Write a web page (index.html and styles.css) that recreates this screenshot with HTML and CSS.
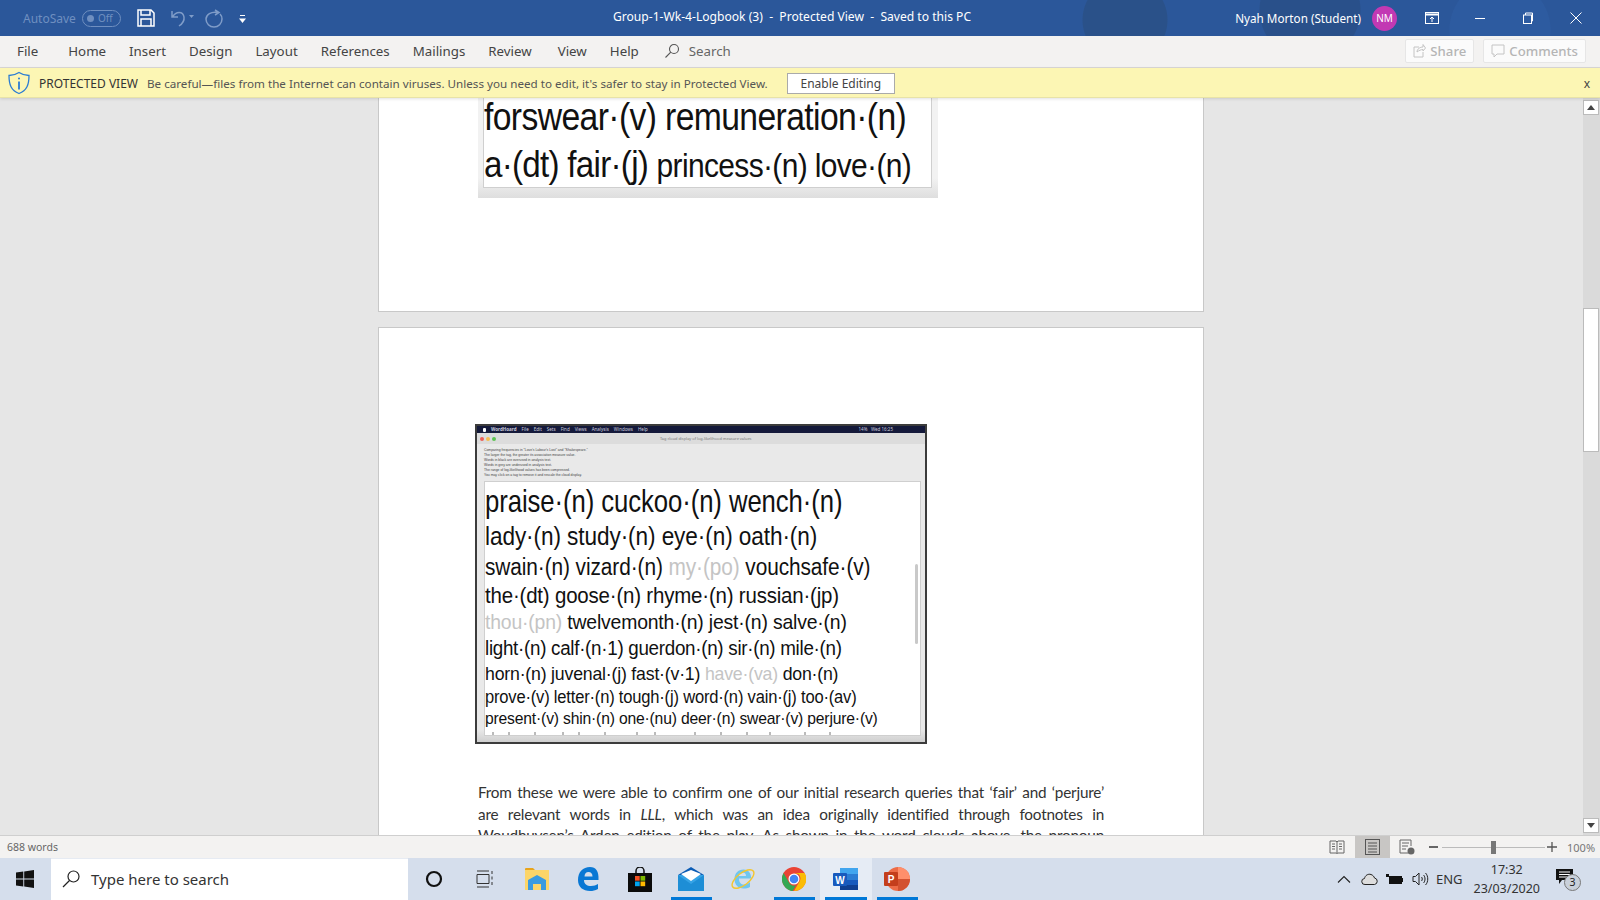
FILE: index.html
```html
<!DOCTYPE html>
<html lang="en">
<head>
<meta charset="utf-8">
<title>Group-1-Wk-4-Logbook (3) - Protected View</title>
<link rel="stylesheet" href="styles.css">
</head>
<body>
<div class="app">
  <header class="titlebar">
    <div class="qat">
      <span class="autosave">AutoSave</span>
      <span class="toggle"><i class="knob"></i><b>Off</b></span>
      <svg class="ic save" width="20" height="20" viewBox="0 0 20 20" fill="none" stroke="#fff" stroke-width="1.5"><path d="M2 2h13l3 3v13H2z"/><path d="M5 2v5h9V2M5 18v-7h10v7"/></svg>
      <svg class="ic undo" width="24" height="20" viewBox="0 0 24 20" fill="none" stroke="#7f9cc8" stroke-width="1.5"><path d="M2 3v6h6M2.500 9C6 3 13 3 14 9c.6 4-2 7-5 9"/><path d="M19 7h5l-2.500 3z" fill="#7f9cc8" stroke="none"/></svg>
      <svg class="ic redo" width="20" height="20" viewBox="0 0 20 20" fill="none" stroke="#7f9cc8" stroke-width="1.500"><path d="M11 2l4 2.500-4 2.500M14 4.500C7 3 2 7 2 11a8 8 0 0 0 16 0c0-2-1-4-2-5"/></svg>
      <svg class="ic more" width="7" height="9" viewBox="0 0 7 9" fill="#fff"><rect x="1" width="5" height="1"/><path d="M0 3.500h7L3.500 8z"/></svg>
    </div>
    <div class="doctitle">Group-1-Wk-4-Logbook (3)&nbsp; -&nbsp; Protected View&nbsp; -&nbsp; Saved to this PC</div>
    <div class="account">
      <span class="username">Nyah Morton (Student)</span>
      <span class="avatar">NM</span>
      <svg class="wc first" width="14" height="12" viewBox="0 0 14 12" fill="none" stroke="#fff"><rect x=".5" y=".5" width="13" height="11"/><path d="M1 2.500h12" stroke-width="2"/><path d="M7 10V5M5 7l2-2 2 2"/></svg>
      <svg class="wc" width="12" height="12" viewBox="0 0 12 12" stroke="#fff"><path d="M1 6.500h10"/></svg>
      <svg class="wc" width="12" height="12" viewBox="0 0 12 12" fill="none" stroke="#fff"><rect x="1.500" y="3" width="8" height="8.500"/><path d="M3.500 3V1h7v8H9.500"/></svg>
      <svg class="wc" width="12" height="12" viewBox="0 0 12 12" stroke="#fff"><path d="M.5 .5l11 11M11.500 .5l-11 11"/></svg>
    </div>
  </header>

  <nav class="ribbon">
    <span class="tab tab-file">File</span>
    <span class="tab">Home</span>
    <span class="tab">Insert</span>
    <span class="tab">Design</span>
    <span class="tab">Layout</span>
    <span class="tab">References</span>
    <span class="tab">Mailings</span>
    <span class="tab tab-review">Review</span>
    <span class="tab">View</span>
    <span class="tab">Help</span>
    <span class="tab tab-search">
      <svg width="16" height="16" viewBox="0 0 16 16" fill="none" stroke="#555" stroke-width="1.100"><circle cx="10" cy="6" r="4.500"/><path d="M6.800 9.200L1.500 14.500"/></svg>
      Search
    </span>
    <span class="ribbon-actions">
      <span class="action">
        <svg width="13" height="15" viewBox="0 0 13 15" fill="none" stroke="#c4c4c4"><path d="M6 4H1v10h9V9"/><path d="M4 9c0-3 3-5 6-5V1.500L12.500 5 10 8V6.500c-2 0-4 1-6 2.500z"/></svg>
        Share
      </span>
      <span class="action">
        <svg width="14" height="14" viewBox="0 0 14 14" fill="none" stroke="#c4c4c4"><path d="M1 1h12v9H6l-3 3v-3H1z"/></svg>
        Comments
      </span>
    </span>
  </nav>

  <div class="msgbar">
    <svg class="shield" width="24" height="24" viewBox="0 0 24 24" fill="none" stroke="#2b7cd3" stroke-width="1.300"><path d="M12 1.500c3 2 6 3 10 3 0 9-2 15-10 18C4 19.500 2 13.500 2 4.500c4 0 7-1 10-3z"/><circle cx="12" cy="7.500" r="1" fill="#2b7cd3" stroke="none"/><path d="M12 10.500v8" stroke-width="1.800"/></svg>
    <strong class="pv">PROTECTED VIEW</strong>
    <span class="pvtext">Be careful—files from the Internet can contain viruses. Unless you need to edit, it's safer to stay in Protected View.</span>
    <span class="enable">Enable Editing</span>
    <span class="msgclose">x</span>
  </div>

  <main class="docarea">
    <div class="canvas">
      <section class="page page-one">
        <div class="macwin macwin-top">
          <div class="cloud cloud-top">
            <div class="ln l-a">forswear·(v) remuneration·(n)</div>
            <div class="ln l-b">a·(dt) fair·(j) <span class="smaller">princess·(n) love·(n)</span></div>
          </div>
        </div>
      </section>
      <section class="page page-two">
        <div class="macwin macwin-shot">
          <div class="macmenu">
            <span class="apple"></span><b>WordHoard</b><span>File</span><span>Edit</span><span>Sets</span><span>Find</span><span>Views</span><span>Analysis</span><span>Windows</span><span>Help</span>
            <span class="macright">14% &nbsp; Wed 16:25</span>
          </div>
          <div class="mactitle">
            <i class="dot red"></i><i class="dot amber"></i><i class="dot green"></i>
            <span class="mactitletext">Tag cloud display of log-likelihood measure values</span>
          </div>
          <div class="macnote">
            <div>Comparing frequencies in "Love's Labour's Lost" and "Shakespeare."</div>
            <div>The larger the tag, the greater its association measure value.</div>
            <div>Words in black are overused in analysis text.</div>
            <div>Words in grey are underused in analysis text.</div>
            <div>The range of log-likelihood values has been compressed.</div>
            <div>You may click on a tag to remove it and rescale the cloud display.</div>
          </div>
          <div class="cloud cloud-main">
            <i class="cloudthumb"></i>
            <div class="ln c1">praise·(n) cuckoo·(n) wench·(n)</div>
            <div class="ln c2">lady·(n) study·(n) eye·(n) oath·(n)</div>
            <div class="ln c3">swain·(n) vizard·(n) <span class="grey">my·(po)</span> vouchsafe·(v)</div>
            <div class="ln c4">the·(dt) goose·(n) rhyme·(n) russian·(jp)</div>
            <div class="ln c5"><span class="grey">thou·(pn)</span> twelvemonth·(n) jest·(n) salve·(n)</div>
            <div class="ln c6">light·(n) calf·(n·1) guerdon·(n) sir·(n) mile·(n)</div>
            <div class="ln c7">horn·(n) juvenal·(j) fast·(v·1) <span class="grey">have·(va)</span> don·(n)</div>
            <div class="ln c8">prove·(v) letter·(n) tough·(j) word·(n) vain·(j) too·(av)</div>
            <div class="ln c9">present·(v) shin·(n) one·(nu) deer·(n) swear·(v) perjure·(v)</div>
            <svg class="ticks" width="360" height="3" viewBox="0 0 360 3" stroke="#777"><path d="M8 0v3M24 0v3M50 0v3M78 0v3M94 0v3M120 0v3M152 0v3M170 0v3M210 0v3M236 0v3M262 0v3M285 0v3M320 0v3M345 0v3"/></svg>
          </div>
        </div>
        <p class="body">
          <span class="bl">From these we were able to confirm one of our initial research queries that ‘fair’ and ‘perjure’</span>
          <span class="bl">are relevant words in <em>LLL</em>, which was an idea originally identified through footnotes in</span>
          <span class="bl">Woudhuysen’s Arden edition of the play. As shown in the word clouds above, the pronoun</span>
        </p>
      </section>
    </div>
    <div class="vscroll">
      <span class="sbtn"><svg width="8" height="5" viewBox="0 0 8 5" fill="#444"><path d="M4 0l4 5H0z"/></svg></span>
      <span class="strack"><i class="sthumb"></i></span>
      <span class="sbtn"><svg width="8" height="5" viewBox="0 0 8 5" fill="#444"><path d="M4 5L8 0H0z"/></svg></span>
    </div>
  </main>

  <footer class="status">
    <span class="words">688 words</span>
    <span class="viewbtn v-read"><svg width="16" height="14" viewBox="0 0 16 14" fill="none" stroke="#666"><path d="M1 1h6l1 1 1-1h6v12H9l-1 .5L7 13H1zM8 2v11M3 4h3M3 6.500h3M3 9h3M10 4h3M10 6.500h3M10 9h3"/></svg></span>
    <span class="viewbtn v-print"><svg width="15" height="16" viewBox="0 0 15 16" fill="none" stroke="#555"><rect x=".5" y=".5" width="14" height="15"/><path d="M3 4h9M3 7h9M3 10h9M3 13h9"/></svg></span>
    <span class="viewbtn v-web"><svg width="16" height="16" viewBox="0 0 16 16" fill="none" stroke="#666"><path d="M9 14H1V1h11v6M3 4h7M3 7h6M3 10h4"/><circle cx="12" cy="12" r="3.500" fill="#666" stroke="none"/></svg></span>
    <span class="zoomctl">
      <i class="zminus"></i>
      <span class="zline"><i class="zthumb"></i></span>
      <svg class="zplus" width="10" height="10" viewBox="0 0 10 10" stroke="#555" stroke-width="1.300"><path d="M0 5h10M5 0v10"/></svg>
      <span class="zpct">100%</span>
    </span>
  </footer>

  <div class="taskbar">
    <svg class="startlogo" width="18" height="18" viewBox="0 0 18 18" fill="#111"><path d="M0 2.600l7.300-1v7H0zM8.200 1.400L18 0v8.600H8.200zM0 9.500h7.300v7l-7.300-1zM8.200 9.500H18V18l-9.800-1.400z"/></svg>
    <div class="tsearch">
      <svg width="20" height="20" viewBox="0 0 20 20" fill="none" stroke="#222" stroke-width="1.200"><circle cx="12.500" cy="7.500" r="5.500"/><path d="M8.500 11.500L2 18"/></svg>
      <span>Type here to search</span>
    </div>
    <div class="tapps">
      <span class="tapp"><svg width="18" height="18" viewBox="0 0 18 18" fill="none" stroke="#111" stroke-width="2.200"><circle cx="9" cy="9" r="7"/></svg></span>
      <span class="tapp"><svg width="18" height="18" viewBox="0 0 18 18" fill="none" stroke="#333"><path d="M1 1h12M1 17h12M1 4.500h12v9H1zM16 1v3M16 6.500v3M16 12v3"/></svg></span>
      <span class="tapp"><svg width="24" height="22" viewBox="0 0 24 22"><path d="M0 1a1 1 0 0 1 1-1h7l2 2H0z" fill="#e8a41c"/><path d="M0 2h24v20H0z" fill="#fcd568"/><path d="M3 12l9-5 9 5v10h-5v-6H8v6H3z" fill="#3a9be0"/></svg></span>
      <span class="tapp"><svg width="22" height="24" viewBox="0 0 22 24"><path d="M21 13H7c0 4 3 6 7 6 3 0 5-1 7-2v5c-3 1.500-5 2-8 2C6 24 1 20 1 13 1 5 6 0 13 0c6 0 9 4 8.500 13zM7.500 9.500h8C15.500 6.500 14 5 11.500 5s-4 2-4 4.500z" fill="#0a78d4"/></svg></span>
      <span class="tapp"><svg width="24" height="25" viewBox="0 0 24 25"><path d="M8 6V4a4 4 0 0 1 8 0v2" fill="none" stroke="#111" stroke-width="1.500"/><path d="M0 6h24v19H0z" fill="#0b0b0b"/><path d="M7 9h4.700v4.700H7z" fill="#f25022"/><path d="M12.500 9h4.700v4.700h-4.700z" fill="#7fba00"/><path d="M7 14.500h4.700v4.700H7z" fill="#00a4ef"/><path d="M12.500 14.500h4.700v4.700h-4.700z" fill="#ffb900"/></svg></span>
      <span class="tapp on"><svg width="26" height="24" viewBox="0 0 26 24"><path d="M0 8L13 0l13 8z" fill="#0b5cb5"/><path d="M0 8h26v16H0z" fill="#35a3e6"/><path d="M3 7l10-4 10 4-10 7z" fill="#fff"/><path d="M0 8l13 9 13-9v16H0z" fill="#1d8ed6"/></svg></span>
      <span class="tapp"><svg width="26" height="26" viewBox="0 0 26 26" fill="none"><path d="M21 12.500H9c0 4 2 6 5 6 3 0 4.500-1 6-2.500v5c-2 1-4 1.500-6.500 1.500C8 22.500 4.500 18.500 4.500 13S8 3.500 13.500 3.500c5 0 8 4 7.500 9zM9 10h7c0-2-1-3.500-3.500-3.500S9 8 9 10z" fill="#6fc6f0"/><ellipse cx="13" cy="13" rx="13" ry="6" transform="rotate(-38 13 13)" stroke="#f3c62f" stroke-width="1.400"/></svg></span>
      <span class="tapp on"><svg width="24" height="24" viewBox="0 0 24 24"><circle cx="12" cy="12" r="12" fill="#ea4335"/><path d="M12 24A12 12 0 0 1 1.600 6L7 15.500a6 6 0 0 0 7 2.800L10.600 24z" fill="#34a853"/><path d="M12 6h10.600A12 12 0 0 1 12 24l5.200-9a6 6 0 0 0-.7-8z" fill="#fbbc05"/><circle cx="12" cy="12" r="5.500" fill="#fff"/><circle cx="12" cy="12" r="4.300" fill="#4285f4"/></svg></span>
      <span class="tapp on active"><svg width="26" height="24" viewBox="0 0 26 24"><path d="M7 1h17a1 1 0 0 1 1 1v20a1 1 0 0 1-1 1H7z" fill="#2b7cd3"/><path d="M7 1h18v6H7z" fill="#41a5ee"/><path d="M7 13h18v5H7z" fill="#185abd"/><path d="M7 18h18v5H7z" fill="#103f91"/><rect y="6" width="14" height="13" rx="1" fill="#185abd"/><text x="7" y="16.500" class="glyph">W</text></svg></span>
      <span class="tapp on"><svg width="26" height="24" viewBox="0 0 26 24"><circle cx="14" cy="12" r="12" fill="#ed6c47"/><path d="M14 0a12 12 0 0 1 12 12H14z" fill="#ff8f6b"/><path d="M14 12h12a12 12 0 0 1-12 12z" fill="#d35230"/><rect y="5" width="14" height="14" rx="1" fill="#c43e1c"/><text x="7" y="16" class="glyph">P</text></svg></span>
    </div>
    <div class="tray">
      <svg width="14" height="8" viewBox="0 0 14 8" fill="none" stroke="#222" stroke-width="1.100"><path d="M1 7.500l6-6 6 6"/></svg>
      <svg class="t-cloud" width="18" height="12" viewBox="0 0 18 12" fill="#ddd" stroke="#222"><path d="M4 11.500a3 3 0 0 1-.5-6C4 2.500 7 .5 10 1.500c2 .7 3 2 3.500 3.500a3.300 3.300 0 0 1 0 6.500z"/></svg>
      <svg class="t-batt" width="17" height="11" viewBox="0 0 17 11"><path d="M0 0h3v3H0z" fill="#111"/><rect x="3" y="2" width="13" height="8" fill="#111"/><rect x="16" y="4" width="1" height="4" fill="#111"/></svg>
      <svg class="t-vol" width="17" height="16" viewBox="0 0 17 16" fill="none" stroke="#222"><path d="M1 5.500h2.500L7 2v12l-3.500-3.500H1zM9.500 6c1 1 1 3 0 4M11.500 4c2 2 2 6 0 8M13.500 2c3 3 3 9 0 12"/></svg>
      <span class="t-eng">ENG</span>
      <span class="clock"><span>17:32</span><span>23/03/2020</span></span>
      <span class="notif">
        <svg width="17" height="15" viewBox="0 0 17 15"><path d="M0 0h17v11H6l-3 4v-4H0z" fill="#111"/><path d="M3 3h11M3 5.500h11M3 8h11" stroke="#fff"/></svg>
        <b class="badge">3</b>
      </span>
    </div>
  </div>
</div>
</body>
</html>
```

FILE: styles.css
```css
* { box-sizing: border-box; }
html, body { margin: 0; height: 100%; overflow: hidden; }
body { font-family: "Noto Sans", "Open Sans", sans-serif; color: #333; }
.app { display: flex; flex-direction: column; width: 1600px; height: 900px; }

/* title bar */
.titlebar {
  height: 36px; flex: none; display: flex; align-items: center; color: #fff; position: relative;
  background:
    radial-gradient(circle at 1125px 20px, #2a5189 0 42px, transparent 43px),
    radial-gradient(circle at 1310px 10px, #29508a 0 50px, transparent 51px),
    radial-gradient(circle at 1500px 30px, #2d5ba0 0 50px, transparent 51px),
    #2b579a;
}
.qat { width: 613px; flex: none; display: flex; align-items: center; padding-left: 23px; }
.autosave { font-size: 12px; color: #6f8fc0; width: 59px; }
.toggle {
  width: 39px; height: 17px; border: 1px solid #6f8fc0; border-radius: 9px; display: flex; align-items: center;
  padding-left: 4px; gap: 4px; color: #6f8fc0; font-size: 10px;
}
.toggle b { font-weight: 400; }
.knob { width: 7px; height: 7px; border-radius: 50%; background: #6f8fc0; }
.save { margin-left: 15px; }
.undo { margin-left: 14px; }
.redo { margin-left: 10px; }
.more { margin-left: 15px; margin-top: 3px; }
.doctitle { font-size: 12.100px; white-space: nowrap; margin-bottom: 4px; }
.account { margin-left: auto; display: flex; align-items: center; }
.username { font-size: 11.700px; }
.avatar {
  width: 25px; height: 25px; border-radius: 50%; background: #c239b3; margin-left: 11px; font-size: 10px;
  display: flex; align-items: center; justify-content: center;
}
.wc { margin-right: 36px; flex: none; }
.wc.first { margin-left: 28px; margin-right: 35px; }
.wc:last-child { margin-right: 18px; }

/* ribbon */
.ribbon {
  height: 32px; flex: none; display: flex; align-items: center; background: #f3f2f1; padding: 0 0 2px 17px;
  font-size: 13.300px; color: #444; border-bottom: 1px solid #dad8d6;
}
.tab { margin-right: 23px; white-space: nowrap; }
.tab-file { margin-right: 30px; }
.tab-review { margin-right: 26px; }
.tab-search { display: flex; align-items: center; gap: 9px; margin-left: 2px; color: #666; }
.ribbon-actions { margin-left: auto; display: flex; gap: 9px; padding-right: 14px; }
.action {
  height: 24px; padding: 0 7px; background: #fbfbfb; border: 1px solid #e6e6e6; border-radius: 2px; color: #b5b5b5;
  display: flex; align-items: center; gap: 4px; font-size: 13.200px; font-weight: 500;
}

/* message bar */
.msgbar {
  height: 30px; flex: none; display: flex; align-items: center; background: #fcf6b4; padding: 2px 0 0 7px;
  font-size: 11.650px; color: #444; border-bottom: 1px solid #e8e3a8; box-shadow: 0 1px 3px rgba(0, 0, 0, .12); position: relative; z-index: 2;
}
.shield { flex: none; margin-top: -2px; }
.pv { font-weight: 400; font-size: 12px; margin-left: 8px; color: #333; white-space: nowrap; }
.pvtext { margin-left: 9px; white-space: nowrap; color: #555; }
.enable {
  margin-left: 19px; width: 108px; height: 21px; background: #fff; border: 1px solid #aaa; color: #444;
  display: flex; align-items: center; justify-content: center; font-size: 12px;
}
.msgclose { margin-left: auto; margin-right: 10px; font-size: 12px; }

/* document */
.docarea { flex: 1; min-height: 0; display: flex; background: #e6e6e6; }
.canvas { flex: 1; min-width: 0; overflow: hidden; display: flex; flex-direction: column; align-items: center; gap: 15px; padding-right: 1px; }
.page { width: 826px; background: #fff; border: 1px solid #c8c8c8; flex: none; }
.page-one { height: 214px; border-top: 0; padding-left: 99px; }
.page-two { height: 600px; padding: 96px 96px 0 99px; border-bottom: 0; }

.macwin { background: #e9e9e9; }
.macwin-top { width: 460px; height: 100px; padding: 0 6px 10px 5px; background: linear-gradient(#f2f2f2, #f2f2f2 80%, #dedede); }
.macwin-shot {
  width: 452px; height: 320px; margin-left: -3px; border: 2px solid #3c3c3c; display: flex; flex-direction: column;
  background: linear-gradient(#e9e9e9 96%, #cfcfcf);
}
.macmenu {
  height: 7px; background: #14193a; color: #ccd; font-size: 4.500px; line-height: 7px; display: flex; gap: 5px; padding-left: 6px; white-space: nowrap;
}
.apple { width: 3px; height: 4px; margin-top: 2px; background: #fff; border-radius: 1px; }
.macright { margin-left: auto; padding-right: 32px; }
.mactitle { height: 11px; background: #dcdcdc; display: flex; align-items: center; gap: 2px; padding-left: 3px; }
.dot { width: 4px; height: 4px; border-radius: 50%; }
.red { background: #ec5f57; }
.amber { background: #f5bd4f; }
.green { background: #5ec454; }
.mactitletext { font-size: 3.900px; color: #777; margin-left: 162px; white-space: nowrap; }
.macnote { height: 37px; padding: 4px 0 0 7px; font-family: "Liberation Sans", sans-serif; font-size: 3.400px; line-height: 5px; color: #444; }
.cloud { background: #fff; border: 1px solid #cfcfcf; font-family: "Liberation Sans", Arial, sans-serif; color: #111; overflow: hidden; position: relative; }
.cloud-top { height: 90px; border-top: 0; padding-left: 0; overflow: visible; }
.cloud-main { width: 437px; height: 255px; margin-left: 7px; padding-left: 0; }
.cloudthumb { position: absolute; right: 2px; top: 82px; width: 3px; height: 80px; background: #c9c9c9; border-radius: 2px; }
.ln { white-space: nowrap; transform-origin: left center; }
.grey { color: #c4c4c4; }
.l-a { font-size: 38px; line-height: 38px; letter-spacing: -.7px; transform: scaleX(.887); }
.l-b { font-size: 36px; line-height: 50px; padding-top: 4px; letter-spacing: -.8px; transform: scaleX(.922); }
.smaller { font-size: 32.500px; letter-spacing: -.7px; }
.c1 { font-size: 30.500px; line-height: 37px; margin-top: 1px; letter-spacing: -.1px; transform: scaleX(.843); }
.c2 { font-size: 26px; line-height: 33px; letter-spacing: -.1px; transform: scaleX(.869); }
.c3 { font-size: 23.500px; line-height: 29px; letter-spacing: -.1px; transform: scaleX(.887); }
.c4 { font-size: 22px; line-height: 27px; letter-spacing: -.2px; transform: scaleX(.93); }
.c5 { font-size: 21px; line-height: 26px; letter-spacing: -.2px; transform: scaleX(.924); }
.c6 { font-size: 19.500px; line-height: 26px; letter-spacing: -.3px; transform: scaleX(.964); }
.c7 { font-size: 18.500px; line-height: 25px; letter-spacing: -.2px; transform: scaleX(.956); }
.c8 { font-size: 17.500px; line-height: 22px; letter-spacing: -.2px; transform: scaleX(.945); }
.c9 { font-size: 17px; line-height: 21px; letter-spacing: -.2px; transform: scaleX(.923); }
.ticks { display: block; margin-top: 3px; }

.body {
  margin: 38px 0 0; width: 626px; font-family: Lato, "Open Sans", sans-serif; font-size: 15.300px; line-height: 21.500px;
  color: #333; letter-spacing: -.2px;
}
.bl { display: block; text-align: justify; text-align-last: justify; white-space: normal; }

/* scrollbar */
.vscroll { width: 17px; flex: none; background: #dadada; display: flex; flex-direction: column; padding: 2px 0; }
.sbtn { height: 15px; width: 16px; flex: none; background: #fff; border: 1px solid #bbb; display: flex; align-items: center; justify-content: center; }
.strack { flex: 1; padding-top: 193px; }
.sthumb { display: block; width: 16px; height: 144px; background: #fff; border: 1px solid #bbb; }

/* status bar */
.status {
  height: 23px; flex: none; display: flex; align-items: center; background: #f3f2f1; border-top: 1px solid #cfcfcf;
  font-size: 10.500px; color: #666; padding-left: 7px;
}
.words { margin-right: auto; margin-bottom: 1px; }
.viewbtn { height: 22px; width: 35px; display: flex; align-items: center; justify-content: center; }
.v-print { background: #c8c6c4; }
.zoomctl { display: flex; align-items: center; width: 175.500px; padding-left: 4px; }
.zminus { width: 9px; height: 2px; background: #666; }
.zline { position: relative; width: 103px; height: 1px; background: #bbb; margin-left: 4.500px; }
.zthumb { position: absolute; left: 49px; top: -6px; width: 5px; height: 13px; background: #777; }
.zplus { margin-left: 2px; }
.zpct { margin-left: 10px; font-size: 11px; color: #777; }

/* taskbar */
.taskbar { height: 42px; flex: none; display: flex; align-items: center; background: #d5deec; color: #222; }
.startlogo { margin-left: 16px; flex: none; }
.tsearch {
  width: 357px; height: 42px; margin-left: 17px; background: #fff; display: flex; align-items: center; padding: 0 0 2px 10px; gap: 10px;
  font-size: 15px; color: #333; border-top: 1px solid #e6ebf3;
}
.tapps { display: flex; }
.tapp { width: 51.500px; height: 42px; display: flex; align-items: center; justify-content: center; position: relative; }
.tapp.on::after { content: ""; position: absolute; left: 5px; right: 5px; bottom: 0; height: 3px; background: #0078d7; }
.tapp.active { background: #e6ecf5; }
.glyph { font-family: "Liberation Sans", sans-serif; font-size: 10px; font-weight: 700; fill: #fff; text-anchor: middle; }
.tray { margin-left: auto; display: flex; align-items: center; font-size: 13px; color: #333; }
.t-cloud { margin-left: 10px; }
.t-batt { margin-left: 7px; }
.t-vol { margin-left: 9px; }
.t-eng { margin-left: 7px; }
.clock { display: flex; flex-direction: column; align-items: center; gap: 1px; margin-left: 11px; font-size: 12.500px; line-height: 18px; }
.notif { position: relative; width: 34px; margin-left: 16px; margin-right: 10px; display: flex; height: 20px; }
.badge {
  position: absolute; left: 8px; top: 5px; width: 17px; height: 17px; border-radius: 50%; background: #c9d0da; border: 1px solid #777;
  font-weight: 400; font-size: 10.500px; line-height: 15px; text-align: center; color: #222;
}
```
